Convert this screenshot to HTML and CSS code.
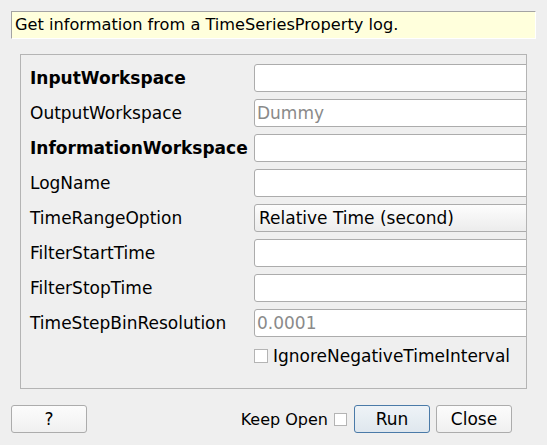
FILE: index.html
```html
<!DOCTYPE html>
<html>
<head>
<meta charset="utf-8">
<link rel="stylesheet" href="styles.css">
</head>
<body>
<div class="dialog">
  <div class="desc">Get information from a TimeSeriesProperty log.</div>
  <div class="group">
    <div class="row"><div class="label bold">InputWorkspace</div><div class="field"></div></div>
    <div class="row"><div class="label">OutputWorkspace</div><div class="field placeholder">Dummy</div></div>
    <div class="row"><div class="label bold">InformationWorkspace</div><div class="field"></div></div>
    <div class="row"><div class="label">LogName</div><div class="field"></div></div>
    <div class="row"><div class="label">TimeRangeOption</div><div class="field combo">Relative Time (second)</div></div>
    <div class="row"><div class="label">FilterStartTime</div><div class="field"></div></div>
    <div class="row"><div class="label">FilterStopTime</div><div class="field"></div></div>
    <div class="row"><div class="label">TimeStepBinResolution</div><div class="field placeholder">0.0001</div></div>
    <div class="row checkrow"><div class="label"></div><div class="check"><span class="box"></span><span>IgnoreNegativeTimeInterval</span></div></div>
  </div>
  <div class="buttons">
    <div class="btn">?</div>
    <div class="spacer"></div>
    <div class="keep">Keep Open <span class="box"></span></div>
    <div class="btn default">Run</div>
    <div class="btn">Close</div>
  </div>
</div>
</body>
</html>
```
FILE: styles.css
```css
html, body {
  margin: 0;
  padding: 0;
  background: #efefef;
}
body {
  font-family: "DejaVu Sans", sans-serif;
  font-size: 16px;
  color: #000;
  width: 547px;
  height: 445px;
  overflow: hidden;
}
.dialog {
  padding: 11px 0 0 11px;
  display: flex;
  flex-direction: column;
}
.desc {
  width: 520px;
  height: 26px;
  border-top: 1px solid #a3a3a3;
  border-left: 1px solid #a3a3a3;
  border-right: 1px solid #ffffff;
  border-bottom: 1px solid #ffffff;
  background: #ffffdc;
  padding-left: 3px;
  line-height: 26px;
  font-size: 16.2px;
}
.group {
  margin-top: 15px;
  margin-left: 9px;
  border: 1px solid #b4b4b4;
  overflow: hidden;
  padding: 9px 0 0 9px;
  box-sizing: border-box;
  height: 335px;
  width: 507px;
  display: flex;
  flex-direction: column;
  gap: 7px;
  font-size: 17px;
}
.row {
  display: flex;
  align-items: center;
  height: 28px;
  flex: none;
}
.label {
  width: 224px;
  flex: none;
  white-space: nowrap;
}
.bold { font-weight: bold; }
.field {
  flex: none;
  width: 300px;
  height: 28px;
  box-sizing: border-box;
  border: 1px solid #acacac;
  border-radius: 3px;
  background: #fff;
  padding-left: 2px;
  line-height: 26px;
  white-space: nowrap;
}
.placeholder { color: #8a8a8a; }
.combo {
  background: linear-gradient(#fdfdfd, #ececec);
  padding-left: 4px;
}
.checkrow { height: 24px; }
.check {
  display: flex;
  align-items: center;
  gap: 5px;
}
.box {
  display: inline-block;
  width: 12px;
  height: 12px;
  border: 1px solid #b4b4b4;
  background: #fff;
  flex: none;
}
.buttons {
  margin-top: 16px;
  display: flex;
  align-items: center;
  width: 501px;
  height: 28px;
}
.btn {
  width: 76px;
  height: 28px;
  box-sizing: border-box;
  border: 1px solid #acacac;
  border-radius: 3px;
  background: linear-gradient(#fcfcfc, #f0f0f0);
  text-align: center;
  line-height: 26px;
  margin-left: 6px;
  font-size: 17px;
}
.btn:first-child { margin-left: 0; }
.btn.default {
  border-color: #4a7aa8;
  background: linear-gradient(#eef3f7, #dfe7ee);
}
.spacer { flex: 1; }
.keep {
  display: flex;
  align-items: center;
  gap: 6px;
  margin-right: 1px;
}
.keep .box { width: 11px; height: 11px; }
```
